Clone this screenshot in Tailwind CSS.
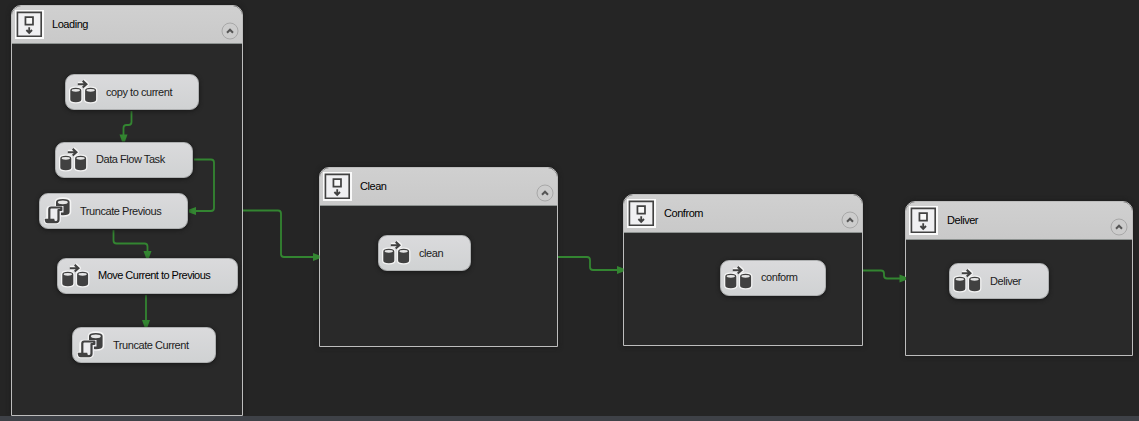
<!DOCTYPE html>
<html lang="en">
<head>
<meta charset="utf-8">
<title>Control Flow</title>
<script src="https://cdn.jsdelivr.net/npm/@tailwindcss/browser@4"></script>
</head>
<body class="relative w-[1139px] h-[421px] overflow-hidden bg-[#252525] font-['Liberation_Sans',sans-serif] text-[11px] leading-[14px] tracking-[-0.45px] whitespace-nowrap text-black">

<svg class="hidden">
  <symbol id="container" viewBox="0 0 30 30">
    <path fill="#fafafa" d="M0 0h30v30H0z"/>
    <path fill="#f0f0f2" stroke="#414141" stroke-width="1.7" d="M2.500 2.500h24.600v24.600H2.500z"/>
    <path fill="#f8f8f8" stroke="#414141" stroke-width="1.8" d="M10.800 7.300h7.800v7.800h-7.800z"/>
    <path fill="none" stroke="#414141" stroke-width="1.9" d="M14.700 17.800v6M11.800 20.700l2.900 3 2.900-3"/>
  </symbol>
  <symbol id="chevron" viewBox="0 0 18 18">
    <circle cx="9" cy="9" r="8" fill="#cccccc" stroke="#a8a8a8"/>
    <path d="M6 10.700l3-3 3 3" fill="none" stroke="#555" stroke-width="2"/>
  </symbol>
  <symbol id="dataflow" viewBox="0 0 30 28">
    <g fill="#f4f4f4" stroke="#f4f4f4" stroke-width="3" stroke-linejoin="round">
      <path d="M1.500 11.500q0-2.500 5.300-2.500t5.300 2.500v9q0 2.500-5.300 2.500t-5.300-2.500zM16.300 11.500q0-2.500 5.300-2.500t5.300 2.500v9q0 2.500-5.300 2.500t-5.300-2.500z"/>
      <path fill="none" stroke-width="5" d="M9 5.200h8M14 2.200l3.500 3-3.500 3"/>
    </g>
    <path fill="#414141" d="M1.300 11.500q0-2.700 5.500-2.700t5.500 2.700v9q0 2.700-5.500 2.700t-5.500-2.700zM16.100 11.500q0-2.700 5.500-2.700t5.500 2.700v9q0 2.700-5.500 2.700t-5.500-2.700z"/>
    <g fill="#e6e6e6">
      <ellipse cx="6.800" cy="11.300" rx="4.200" ry="1.400"/>
      <ellipse cx="21.600" cy="11.300" rx="4.200" ry="1.400"/>
    </g>
    <path fill="none" stroke="#414141" stroke-width="2.100" d="M8.800 5.200h8.400M13.700 1.900l3.700 3.300-3.700 3.300"/>
  </symbol>
  <symbol id="sql" viewBox="0 0 30 30">
    <g fill="#f4f4f4" stroke="#f4f4f4" stroke-width="3.500" stroke-linejoin="round">
      <path d="M12.500 5q0-3 6.500-3t6.500 3v10q0 3-6.500 3t-6.500-3z"/>
      <path d="M4 22.500V13q0-2.500 2.500-2.500h10v3H15v9q0 3-3 3H3.500q-2 0-2-3z"/>
    </g>
    <path fill="#414141" d="M12 5q0-3 6.800-3t6.800 3v10q0 3.200-6.800 3.200T12 15z"/>
    <ellipse cx="18.800" cy="5.300" rx="5" ry="1.900" fill="#e6e6e6"/>
    <path fill="#ececef" stroke="#ececef" stroke-width="2" d="M5 10h13.500v4.500h-2.500v9H5z"/>
    <path fill="#ececef" stroke="#414141" stroke-width="2.200" stroke-linejoin="round" d="M5.300 22V12.500q0-2 2-2h10v2.500H14.500v9.500q0 2.700-2.500 2.700"/>
    <path fill="#414141" d="M.7 21.800h9.500q0 2.500 2 2.500v2H3.700q-3 0-3-4.500z"/>
  </symbol>
</svg>

<!-- Loading -->
<section class="absolute left-[11px] top-[5px] w-[232px] h-[411px] flex flex-col rounded-t-[10px] border border-[#bdbdbd] bg-[#292929] shadow-[0_0_5px_#1a1a1a]">
  <header class="h-[38px] shrink-0 flex items-start rounded-t-[9px] border-b border-[#8d9290] bg-linear-to-b from-[#d0d0d0] to-[#c9c9c9] pl-[3px] pr-[3px] pt-[4px]">
    <svg class="size-[29px]"><use href="#container"/></svg>
    <h2 class="ml-[8px] mt-[7px] flex-1">Loading</h2>
    <svg class="size-[18px] mt-[12px]"><use href="#chevron"/></svg>
  </header>
</section>

<!-- Clean -->
<section class="absolute left-[319px] top-[167px] w-[239px] h-[180px] flex flex-col rounded-t-[10px] border border-[#bdbdbd] bg-[#292929] shadow-[0_0_5px_#1a1a1a]">
  <header class="h-[38px] shrink-0 flex items-start rounded-t-[9px] border-b border-[#8d9290] bg-linear-to-b from-[#d0d0d0] to-[#c9c9c9] pl-[3px] pr-[3px] pt-[4px]">
    <svg class="size-[29px]"><use href="#container"/></svg>
    <h2 class="ml-[8px] mt-[7px] flex-1">Clean</h2>
    <svg class="size-[18px] mt-[12px]"><use href="#chevron"/></svg>
  </header>
</section>

<!-- Confrom -->
<section class="absolute left-[623px] top-[194px] w-[240px] h-[152px] flex flex-col rounded-t-[10px] border border-[#bdbdbd] bg-[#292929] shadow-[0_0_5px_#1a1a1a]">
  <header class="h-[38px] shrink-0 flex items-start rounded-t-[9px] border-b border-[#8d9290] bg-linear-to-b from-[#d0d0d0] to-[#c9c9c9] pl-[3px] pr-[3px] pt-[4px]">
    <svg class="size-[29px]"><use href="#container"/></svg>
    <h2 class="ml-[8px] mt-[7px] flex-1">Confrom</h2>
    <svg class="size-[18px] mt-[12px]"><use href="#chevron"/></svg>
  </header>
</section>

<!-- Deliver -->
<section class="absolute left-[905px] top-[201px] w-[228px] h-[155px] flex flex-col rounded-t-[10px] border border-[#bdbdbd] bg-[#292929] shadow-[0_0_5px_#1a1a1a]">
  <header class="h-[38px] shrink-0 flex items-start rounded-t-[9px] border-b border-[#8d9290] bg-linear-to-b from-[#d0d0d0] to-[#c9c9c9] pl-[3px] pr-[4px] pt-[4px]">
    <svg class="size-[29px]"><use href="#container"/></svg>
    <h2 class="ml-[9px] mt-[7px] flex-1">Deliver</h2>
    <svg class="size-[18px] mt-[12px]"><use href="#chevron"/></svg>
  </header>
</section>

<!-- Precedence constraints -->
<svg class="absolute inset-0 w-[1139px] h-[421px]" viewBox="0 0 1139 421">
  <g fill="none" stroke="#338531" stroke-width="1.800">
    <path d="M131.500 111v11q0 3-3 3h-2q-3 0-3 3v8"/>
    <path d="M194 159.500h17q3 0 3 3v45.500q0 3-3 3h-15"/>
    <path d="M113.500 230v10.500q0 3 3 3h28q3 0 3 3v6"/>
    <path d="M146 295v27"/>
    <path d="M243 210.500h35q3 0 3 3v40.500q0 3 3 3h30"/>
    <path d="M558 257h29q3 0 3 3v7q0 3 3 3h26"/>
    <path d="M863 270.500h18q3 0 3 3v2q0 3 3 3h13"/>
  </g>
  <g fill="#338531">
    <path d="M119.500 134.500h8l-2.500 7h-3zM196 207v8l-7-2.500v-3zM143.500 251h8l-2.500 7h-3zM142 320h8l-2.500 7h-3zM313 253v8l6.500-2.500v-3zM617 266v8l6.500-2.500v-3zM899.500 274.500v8l6.500-2.500v-3z"/>
  </g>
</svg>

<!-- Tasks -->
<div class="absolute left-[65px] top-[74px] w-[134px] h-[36px] flex items-center rounded-[9px] border border-[#aeb0b1] bg-linear-to-b from-[#dadadc] to-[#d0d2d3] shadow-[0_1px_4px_#171717] pl-[3px]">
  <svg class="w-[30px] h-[28px] mt-[2px]"><use href="#dataflow"/></svg><span class="ml-[7px] text-[#1c1c1c]">copy to current</span>
</div>
<div class="absolute left-[55px] top-[142px] w-[138px] h-[36px] flex items-center rounded-[9px] border border-[#aeb0b1] bg-linear-to-b from-[#dadadc] to-[#d0d2d3] shadow-[0_1px_4px_#171717] pl-[3px]">
  <svg class="w-[30px] h-[28px] mt-[2px]"><use href="#dataflow"/></svg><span class="ml-[7px] -mt-[2px] text-[#1c1c1c]">Data Flow Task</span>
</div>
<div class="absolute left-[39px] top-[193px] w-[149px] h-[36px] flex items-center rounded-[9px] border border-[#aeb0b1] bg-linear-to-b from-[#dadadc] to-[#d0d2d3] shadow-[0_1px_4px_#171717] pl-[4px]">
  <svg class="size-[30px] mt-[2px]"><use href="#sql"/></svg><span class="ml-[6px] text-[#1c1c1c]">Truncate Previous</span>
</div>
<div class="absolute left-[57px] top-[258px] w-[181px] h-[36px] flex items-center rounded-[9px] border border-[#aeb0b1] bg-linear-to-b from-[#dadadc] to-[#d0d2d3] shadow-[0_1px_4px_#171717] pl-[3px]">
  <svg class="w-[30px] h-[28px] mt-[2px]"><use href="#dataflow"/></svg><span class="ml-[7px] -mt-[2px] tracking-[-0.52px]">Move Current to Previous</span>
</div>
<div class="absolute left-[72px] top-[327px] w-[144px] h-[36px] flex items-center rounded-[9px] border border-[#aeb0b1] bg-linear-to-b from-[#dadadc] to-[#d0d2d3] shadow-[0_1px_4px_#171717] pl-[4px]">
  <svg class="size-[30px] mt-[2px]"><use href="#sql"/></svg><span class="ml-[6px] text-[#1c1c1c]">Truncate Current</span>
</div>
<div class="absolute left-[378px] top-[235px] w-[93px] h-[36px] flex items-center rounded-[9px] border border-[#aeb0b1] bg-linear-to-b from-[#dadadc] to-[#d0d2d3] shadow-[0_1px_4px_#171717] pl-[3px]">
  <svg class="w-[30px] h-[28px] mt-[2px]"><use href="#dataflow"/></svg><span class="ml-[7px] text-[#1c1c1c]">clean</span>
</div>
<div class="absolute left-[720px] top-[260px] w-[106px] h-[36px] flex items-center rounded-[9px] border border-[#aeb0b1] bg-linear-to-b from-[#dadadc] to-[#d0d2d3] shadow-[0_1px_4px_#171717] pl-[3px]">
  <svg class="w-[30px] h-[28px] mt-[1px]"><use href="#dataflow"/></svg><span class="ml-[7px] -mt-[2px] text-[#1c1c1c]">conform</span>
</div>
<div class="absolute left-[949px] top-[263px] w-[100px] h-[36px] flex items-center rounded-[9px] border border-[#aeb0b1] bg-linear-to-b from-[#dadadc] to-[#d0d2d3] shadow-[0_1px_4px_#171717] pl-[3px]">
  <svg class="w-[30px] h-[28px] mt-[2px]"><use href="#dataflow"/></svg><span class="ml-[7px] text-[#1c1c1c]">Deliver</span>
</div>

<footer class="absolute inset-x-0 bottom-0 h-[5px] bg-[#3e4147]"></footer>
</body>
</html>
